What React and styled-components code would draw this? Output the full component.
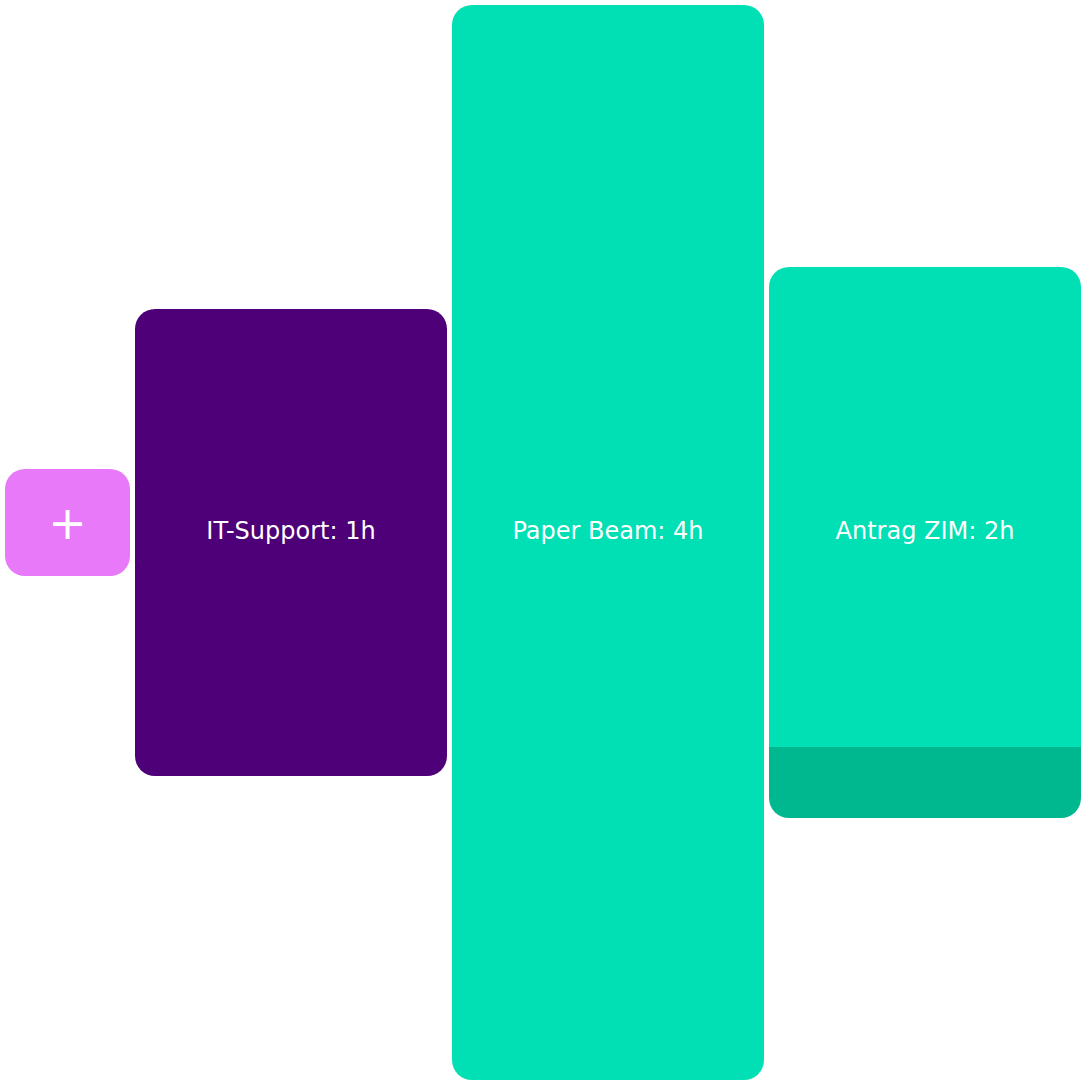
import React from "react";
import styled, { createGlobalStyle } from "styled-components";

const Global = createGlobalStyle`
  html, body { margin: 0; padding: 0; background: #ffffff; }
  body { font-family: "DejaVu Sans", "Noto Sans", sans-serif; }
`;

const Board = styled.div`
  display: flex;
  flex-direction: row;
  align-items: center;
  gap: 5px;
  padding: 5px;
`;

const AddButton = styled.button`
  width: 125px;
  height: 107px;
  margin-bottom: 40px;
  border: none;
  border-radius: 20px;
  background: #e879f9;
  color: #ffffff;
  font-family: "DejaVu Sans", sans-serif;
  font-size: 46px;
  line-height: 1;
  display: flex;
  align-items: center;
  justify-content: center;
  padding: 0;
  flex-shrink: 0;
  cursor: pointer;
`;

const Card = styled.div`
  width: 312px;
  height: ${(p) => p.$h}px;
  flex-shrink: 0;
  border-radius: 20px;
  background: ${(p) =>
    p.$footer
      ? `linear-gradient(to bottom, ${p.$bg} calc(100% - ${p.$footer}px), ${p.$footerBg} calc(100% - ${p.$footer}px))`
      : p.$bg};
  color: #ffffff;
  display: flex;
  align-items: center;
  justify-content: center;
  padding-bottom: 23px;
  box-sizing: border-box;
  font-size: 24px;
`;

const Label = styled.span`
  white-space: nowrap;
`;

export default function App() {
  return (
    <>
      <Global />
      <Board>
        <AddButton>+</AddButton>
        <Card $h={467} $bg="#4e0079">
          <Label>IT-Support: 1h</Label>
        </Card>
        <Card $h={1075} $bg="#00e0b4">
          <Label>Paper Beam: 4h</Label>
        </Card>
        <Card $h={551} $bg="#00e0b4" $footer={71} $footerBg="#00b890">
          <Label>Antrag ZIM: 2h</Label>
        </Card>
      </Board>
    </>
  );
}
